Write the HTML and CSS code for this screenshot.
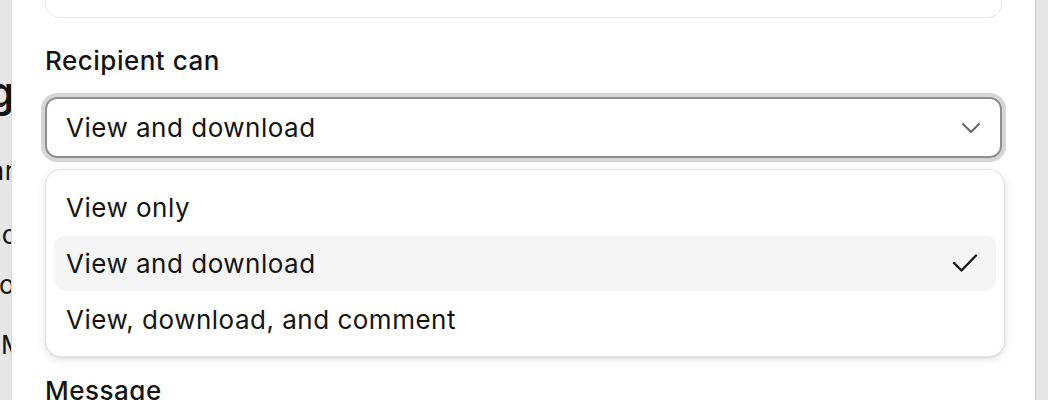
FILE: index.html
```html
<!DOCTYPE html>
<html lang="en">
<head>
<meta charset="utf-8">
<title>Share settings</title>
<link rel="stylesheet" href="styles.css">
</head>
<body>
<div class="page">
  <div class="bgstrip">
    <div class="bgline bg-h">Sharing</div>
    <div class="bgline bg-a">Shar</div>
    <div class="bgline bg-s">Files sc</div>
    <div class="bgline bg-o">Go</div>
    <div class="bgline bg-m">M</div>
  </div>
  <div class="dialog">
    <div class="field-top"><span>Only people invited</span></div>

    <div class="label">Recipient can</div>
    <div class="select-wrap">
      <div class="select">
        <span>View and download</span>
        <svg class="chev" width="20" height="12" viewBox="0 0 20 12"><path d="M2 2l8 8 8-8" fill="none" stroke="#666" stroke-width="2" stroke-linecap="round" stroke-linejoin="round"/></svg>
      </div>
      <div class="menu">
        <div class="opt">View only</div>
        <div class="opt sel">View and download
          <svg class="check" width="26" height="20" viewBox="0 0 26 20"><path d="M2 10l7.5 7.5L24 2.5" fill="none" stroke="#1a1a1a" stroke-width="2.4" stroke-linecap="round" stroke-linejoin="round"/></svg>
        </div>
        <div class="opt">View, download, and comment</div>
      </div>
    </div>

    <div class="hidden-field"></div>

    <div class="label msg">Message</div>
  </div>
  <div class="rightgap"></div>
</div>
</body>
</html>
```

FILE: styles.css
```css
* { box-sizing: border-box; }
html, body { margin: 0; padding: 0; }
body {
  width: 1048px;
  height: 400px;
  overflow: hidden;
  background: #e6e6e6;
  font-family: Inter, "Noto Sans", sans-serif;
  color: #141414;
  letter-spacing: 0.5px;
}
.page {
  display: flex;
  height: 400px;
}
.bgstrip {
  width: 11px;
  flex: none;
  overflow: hidden;
  background: #e6e6e6;
  display: flex;
  flex-direction: column;
}
.bgline {
  flex: none;
  display: flex;
  justify-content: flex-end;
  white-space: nowrap;
  font-size: 26px;
  line-height: 30px;
  color: #141414;
}
.bg-h { font-size: 42px; font-weight: 600; line-height: 48px; margin-top: 68px; margin-right: -4px; }
.bg-a { margin-top: 40px; margin-right: -4px; }
.bg-s { margin-top: 34px; margin-right: -6px; }
.bg-o { margin-top: 20px; margin-right: -4px; }
.bg-m { margin-top: 30px; margin-right: -14px; }

.dialog {
  width: 1025px;
  flex: none;
  background: #fff;
  border-left: 1px solid #d6d6d6;
  border-right: 1px solid #d0d0d0;
  padding: 0 33px 0 33px;
  display: flex;
  flex-direction: column;
}
.dialog > * { flex: none; }
.field-top {
  margin-top: -40px;
  height: 58px;
  border: 1.5px solid #e6e6e6;
  border-radius: 14px;
  padding: 12px 20px;
  font-size: 26px;
  color: #141414;
  overflow: hidden;
}
.field-top span { display: block; margin-top: -22px; }
.label {
  margin-top: 27px;
  font-size: 26px;
  line-height: 32px;
  font-weight: 500;
  color: #141414;
}
.select-wrap {
  position: relative;
  margin-top: 20px;
}
.select {
  height: 61px;
  border: 2px solid #8f8f8f;
  border-radius: 12px;
  box-shadow: 0 0 0 4px #d6d6d6;
  display: flex;
  align-items: center;
  justify-content: space-between;
  padding: 0 19px 0 19px;
  font-size: 26px;
  color: #141414;
}
.chev { display: block; margin-top: 1px; }
.menu {
  position: absolute;
  top: 72px;
  left: 0;
  right: -3px;
  background: #fff;
  border: 1px solid #e2e2e2;
  border-radius: 16px;
  box-shadow: 0 3px 10px rgba(0,0,0,0.10), 0 1px 2px rgba(0,0,0,0.08);
  padding: 9px 8px;
  z-index: 2;
}
.opt {
  height: 56px;
  display: flex;
  align-items: center;
  justify-content: space-between;
  padding: 0 18px 0 12px;
  font-size: 26px;
  color: #141414;
  border-radius: 12px;
}
.opt.sel { background: #f5f5f5; }
.check { display: block; }
.hidden-field {
  margin-top: 60px;
  height: 120px;
  border: 1.5px solid #e6e6e6;
  border-radius: 14px;
}
.label.msg { margin-top: 37px; }
.rightgap { flex: 1; background: #e6e6e6; }
```
